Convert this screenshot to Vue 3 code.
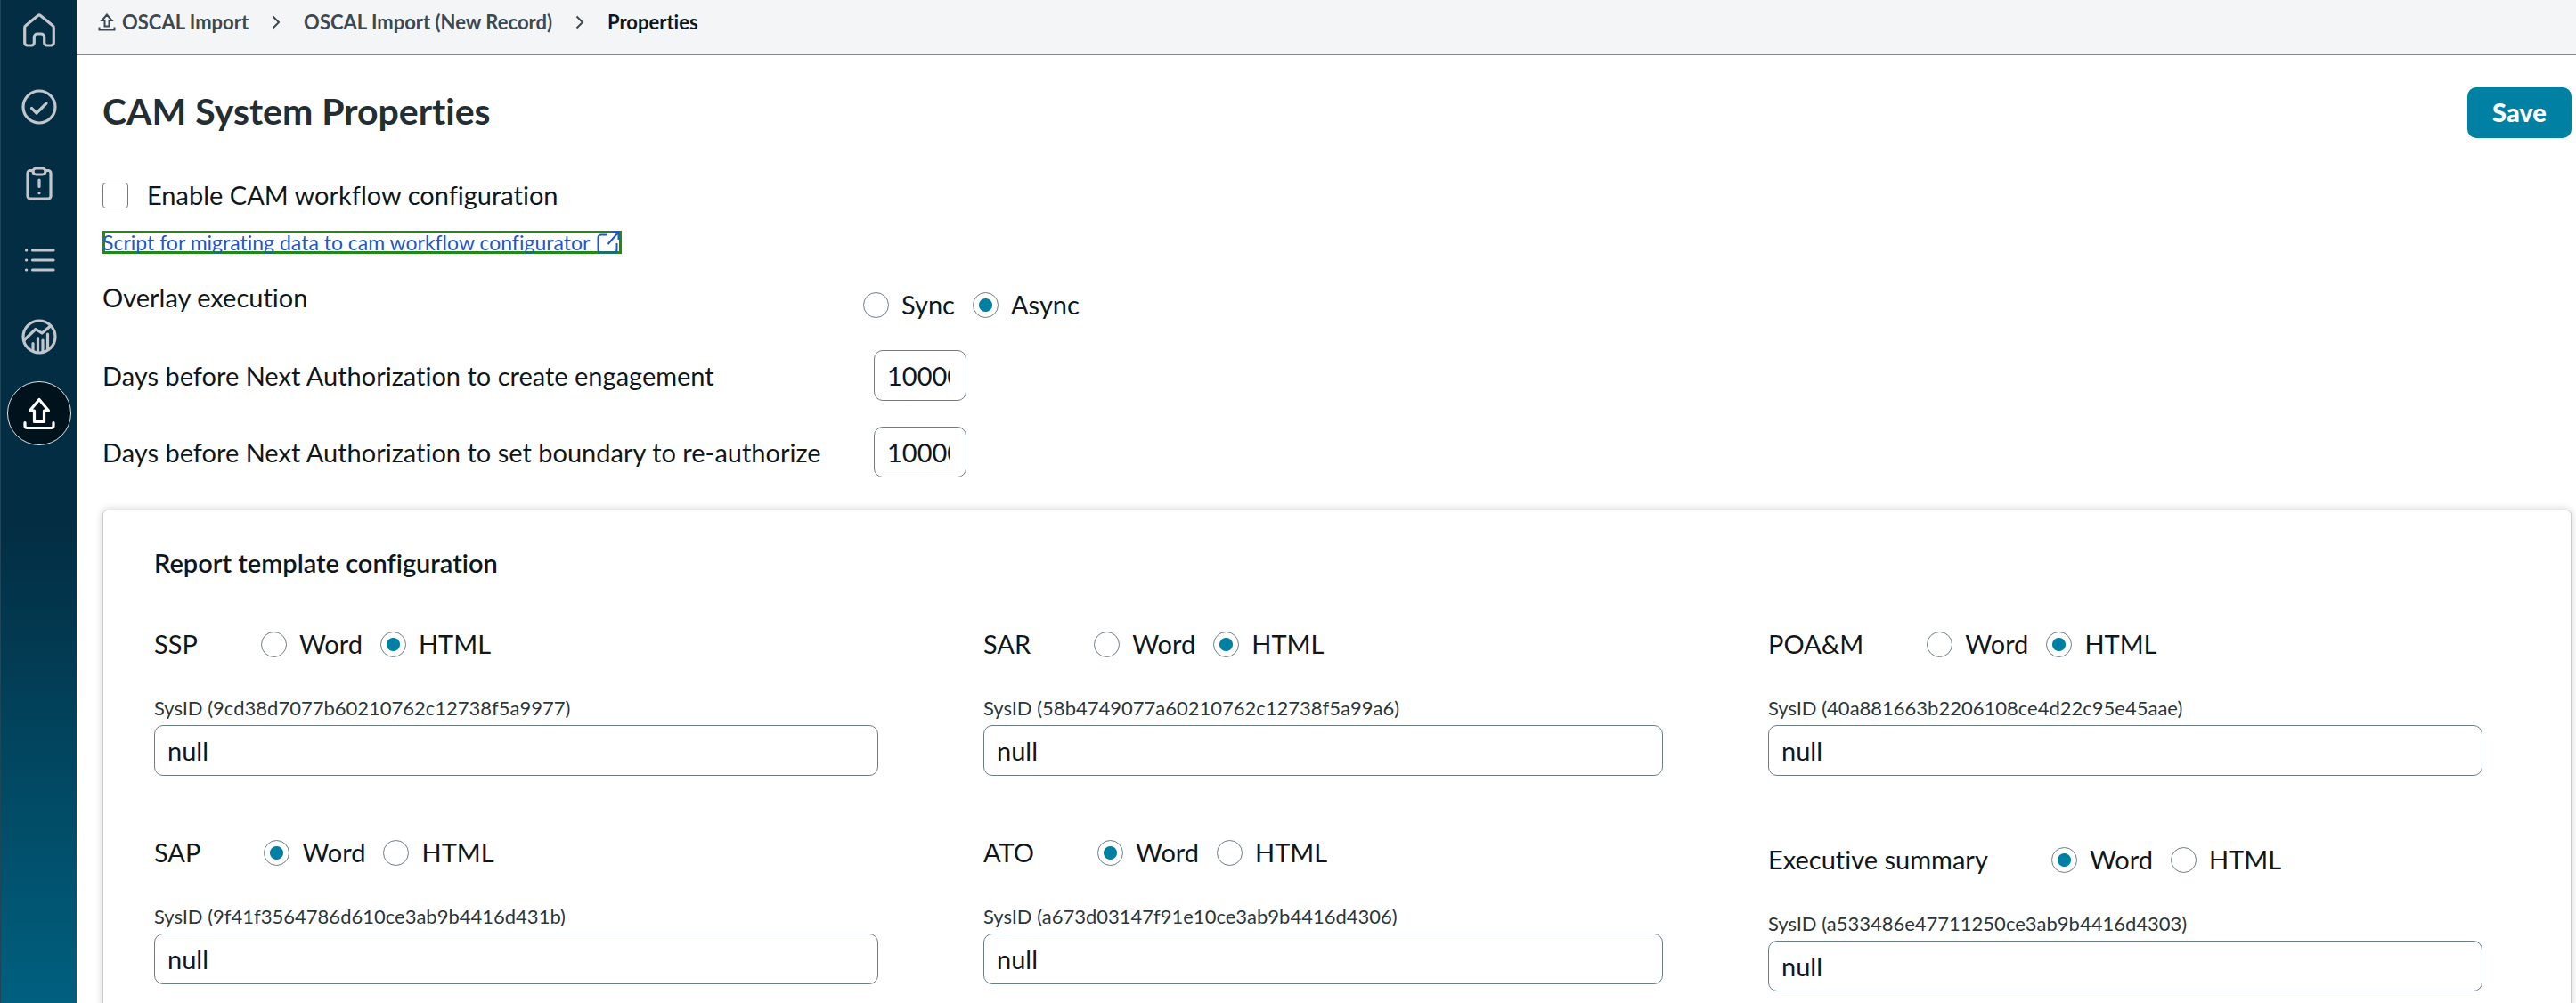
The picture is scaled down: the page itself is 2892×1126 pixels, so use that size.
<script setup>
import { ref } from 'vue'

const enableWorkflow = ref(false)
const execution = ref('Async')
const executionOptions = ['Sync', 'Async']
const formats = ['Word', 'HTML']

const thresholds = ref([
  { id: 'create-engagement', label: 'Days before Next Authorization to create engagement', value: '10000' },
  { id: 're-authorize', label: 'Days before Next Authorization to set boundary to re-authorize', value: '10000' },
])

const templates = ref([
  { id: 'ssp', name: 'SSP', format: 'HTML', sysId: '9cd38d7077b60210762c12738f5a9977', value: 'null' },
  { id: 'sar', name: 'SAR', format: 'HTML', sysId: '58b4749077a60210762c12738f5a99a6', value: 'null' },
  { id: 'poam', name: 'POA&M', format: 'HTML', sysId: '40a881663b2206108ce4d22c95e45aae', value: 'null' },
  { id: 'sap', name: 'SAP', format: 'Word', sysId: '9f41f3564786d610ce3ab9b4416d431b', value: 'null' },
  { id: 'ato', name: 'ATO', format: 'Word', sysId: 'a673d03147f91e10ce3ab9b4416d4306', value: 'null' },
  { id: 'exec', name: 'Executive summary', format: 'Word', sysId: 'a533486e47711250ce3ab9b4416d4303', value: 'null', long: true },
])
</script>

<template>
  <div class="shell">
    <nav class="sidebar" aria-label="Workspace">
      <a href="#" class="nav-item" aria-label="Home">
        <svg viewBox="0 0 40 40">
          <path d="M18.6 3.6 4.8 14.8a3 3 0 0 0-1.1 2.3V34a3 3 0 0 0 3 3h4.6a3 3 0 0 0 3-3v-6.500a3.500 3.500 0 0 1 3.500-3.500h4.400a3.500 3.500 0 0 1 3.500 3.500V34a3 3 0 0 0 3 3h4.600a3 3 0 0 0 3-3V17.100a3 3 0 0 0-1.100-2.300L21.400 3.600a2.200 2.200 0 0 0-2.800 0z" />
        </svg>
      </a>
      <a href="#" class="nav-item" aria-label="Tasks">
        <svg viewBox="0 0 40 40">
          <circle cx="20" cy="20" r="18" />
          <path d="M11.500 21.500l5.500 5.500 11-11" />
        </svg>
      </a>
      <a href="#" class="nav-item" aria-label="Issues">
        <svg viewBox="0 0 40 40">
          <path d="M13 5.500H10a3 3 0 0 0-3 3V34a3 3 0 0 0 3 3h20a3 3 0 0 0 3-3V8.500a3 3 0 0 0-3-3h-3" />
          <rect x="13" y="3" width="14" height="7" rx="3.500" />
          <path d="M20 16v7.500M20 30.500v.2" />
        </svg>
      </a>
      <a href="#" class="nav-item" aria-label="Lists">
        <svg viewBox="0 0 40 40">
          <path d="M12.500 9H36M12.500 20H36M12.500 31H36M5.500 9h.2M5.500 20h.2M5.500 31h.2" />
        </svg>
      </a>
      <a href="#" class="nav-item" aria-label="Analytics">
        <svg viewBox="0 0 40 40">
          <circle cx="20" cy="20" r="18" />
          <path d="M3.500 23.500 16 11.500l7 4.500 9-7.500M13 27.500v8M18.500 21.500v16M24 24v13.500M29.500 17v17" />
        </svg>
      </a>
      <a href="#" class="nav-item active" aria-label="OSCAL Import">
        <svg viewBox="0 0 40 40">
          <path d="M20 4.500 9.500 17h5v12.500h11V17h5zM4 30.500v3.500a2.500 2.500 0 0 0 2.500 2.500h27a2.500 2.500 0 0 0 2.500-2.500v-3.500" />
        </svg>
      </a>
    </nav>

    <div class="page">
      <nav class="breadcrumbs" aria-label="Breadcrumb">
        <a href="#" class="crumb">
          <svg class="crumb-icon" viewBox="0 0 20 20">
            <path d="M10 1.500 4.500 8H7.500v6.500h5V8h3zM1.500 15.500v3h17v-3" />
          </svg>
          OSCAL Import
        </a>
        <svg class="chevron" viewBox="0 0 10 16"><path d="M1.500 1.500 8 8l-6.500 6.500" /></svg>
        <a href="#" class="crumb">OSCAL Import (New Record)</a>
        <svg class="chevron" viewBox="0 0 10 16"><path d="M1.500 1.500 8 8l-6.500 6.500" /></svg>
        <span class="crumb current">Properties</span>
      </nav>

      <main class="content">
        <header class="title-bar">
          <h1>CAM System Properties</h1>
          <button type="button" class="save">Save</button>
        </header>

        <label class="check">
          <input v-model="enableWorkflow" type="checkbox" />
          Enable CAM workflow configuration
        </label>

        <a href="#" class="script-link">
          <span>Script for migrating data to cam workflow configurator</span>
          <svg viewBox="0 0 26 26">
            <path d="M12 4.500H4.500a3 3 0 0 0-3 3v14a3 3 0 0 0 3 3h15a3 3 0 0 0 3-3V14M16 1.500h8.500V10M24.500 1.500 12.500 15" />
          </svg>
        </a>

        <div class="setting overlay" role="radiogroup" aria-labelledby="overlay-label">
          <span id="overlay-label" class="setting-label">Overlay execution</span>
          <div class="options">
            <label v-for="option in executionOptions" :key="option" class="option">
              <input v-model="execution" type="radio" name="execution" :value="option" />
              {{ option }}
            </label>
          </div>
        </div>

        <div v-for="item in thresholds" :key="item.id" class="setting">
          <label class="setting-label" :for="item.id">{{ item.label }}</label>
          <input :id="item.id" v-model="item.value" type="text" class="field days" />
        </div>

        <section class="card">
          <h2>Report template configuration</h2>
          <div class="templates">
            <div v-for="item in templates" :key="item.id" class="template" :class="{ long: item.long }">
              <div class="template-head" role="radiogroup" :aria-label="item.name">
                <span>{{ item.name }}</span>
                <div class="options">
                  <label v-for="format in formats" :key="format" class="option">
                    <input v-model="item.format" type="radio" :name="item.id" :value="format" />
                    {{ format }}
                  </label>
                </div>
              </div>
              <label class="sys-label" :for="`sys-${item.id}`">SysID ({{ item.sysId }})</label>
              <input :id="`sys-${item.id}`" v-model="item.value" type="text" class="field" />
            </div>
          </div>
        </section>
      </main>
    </div>
  </div>
</template>

<style>
body {
  margin: 0;
  background: #fff;
}
</style>

<style scoped>
.shell {
  display: flex;
  height: 100vh;
  overflow: hidden;
  color: #10171a;
  font-family: Lato, 'Liberation Sans', sans-serif;
  font-size: 29px;
  font-variant-ligatures: none;
  line-height: 36px;
}

.sidebar {
  display: flex;
  flex: none;
  flex-direction: column;
  align-items: center;
  gap: 14px;
  box-sizing: border-box;
  width: 86px;
  margin-top: -2px;
  border-left: 1px solid #1f4558;
  background: linear-gradient(180deg, #032d42 0%, #032d42 52%, #00607f 100%);
}

.nav-item {
  display: flex;
  flex: none;
  align-items: center;
  justify-content: center;
  box-sizing: border-box;
  width: 72px;
  height: 72px;
  border-radius: 50%;
  color: #c0c6cc;
}

.nav-item svg {
  width: 40px;
  height: 40px;
  fill: none;
  stroke: currentColor;
  stroke-width: 3.2;
  stroke-linecap: round;
  stroke-linejoin: round;
}

.nav-item.active {
  border: 1px solid #dfe5e8;
  background: #00131d;
  color: #fff;
}

.page {
  flex: 1;
  min-width: 0;
}

.breadcrumbs {
  display: flex;
  align-items: center;
  gap: 26px;
  box-sizing: border-box;
  height: 62px;
  padding: 0 24px 12px;
  border-bottom: 1px solid #7d8a94;
  background: #f4f5f7;
  font-size: 22px;
  line-height: 28px;
}

.crumb {
  display: flex;
  align-items: center;
  gap: 7px;
  color: #3c4950;
  font-weight: 700;
  text-decoration: none;
}

.crumb.current {
  color: #10171a;
}

.crumb-icon {
  width: 20px;
  height: 20px;
  fill: none;
  stroke: currentColor;
  stroke-width: 2;
}

.chevron {
  width: 10px;
  height: 16px;
  fill: none;
  stroke: #3c4950;
  stroke-width: 2;
}

.content {
  display: flex;
  flex-direction: column;
  align-items: flex-start;
  padding: 36px 5px 0 29px;
}

.title-bar {
  display: flex;
  align-items: flex-start;
  justify-content: space-between;
  align-self: stretch;
}

h1 {
  margin: 0;
  color: #232e33;
  font-size: 41px;
  font-weight: 700;
  line-height: 54px;
}

.save {
  width: 117px;
  height: 57px;
  padding: 0 0 2px;
  border: 0;
  border-radius: 10px;
  background: #0080a3;
  color: #fff;
  font: inherit;
  font-weight: 900;
}

.check {
  display: flex;
  align-items: center;
  gap: 21px;
  margin-top: 46px;
}

.check input {
  width: 29px;
  height: 29px;
  margin: 0;
  border: 1px solid #6e7c83;
  border-radius: 4px;
  background: #fff;
  appearance: none;
}

.check input:checked {
  background: #0080a3;
}

.script-link {
  display: flex;
  align-items: center;
  gap: 8px;
  height: 26px;
  margin-top: 22px;
  padding-right: 2px;
  box-shadow: inset 0 0 0 3px #238815;
  color: #1f58c7;
  font-size: 23px;
  line-height: 26px;
  text-decoration: none;
}

.script-link svg {
  width: 26px;
  height: 26px;
  fill: none;
  stroke: currentColor;
  stroke-width: 2;
}

.setting {
  display: grid;
  grid-template-columns: 866px auto;
  align-items: center;
  margin-top: 29px;
}

.setting.overlay {
  grid-template-columns: 854px auto;
  align-items: start;
  margin-top: 31px;
  margin-bottom: 4px;
}

.overlay .options {
  margin-top: 8px;
}

.options {
  display: flex;
  gap: 20px;
}

.option {
  display: flex;
  align-items: center;
  gap: 14px;
}

.option input {
  width: 29px;
  height: 29px;
  margin: 0;
  border: 1px solid #6e7c83;
  border-radius: 50%;
  background: #fff;
  appearance: none;
}

.option input:checked {
  background: radial-gradient(circle, #0080a3 7px, #fff 8px);
}

.field {
  box-sizing: border-box;
  width: 100%;
  height: 57px;
  padding: 0 14px;
  border: 1px solid #6e7c83;
  border-radius: 10px;
  background: #fff;
  color: inherit;
  font: inherit;
  font-variant-ligatures: none;
}

.field.days {
  width: 104px;
  padding-right: 18px;
}

.card {
  align-self: stretch;
  box-sizing: border-box;
  margin-top: 36px;
  padding: 41px 99px 60px 57px;
  border: 1px solid #ccc;
  border-radius: 6px;
  box-shadow: 0 0 8px rgba(0, 0, 0, 0.2);
}

h2 {
  margin: 0;
  font-size: 29px;
  font-weight: 600;
  line-height: 36px;
}

.templates {
  display: grid;
  grid-template-columns: 813fr 763fr 802fr;
  gap: 68px 118px;
  margin-top: 55px;
}

.template {
  display: flex;
  flex-direction: column;
}

.template.long {
  padding-top: 8px;
}

.template-head {
  display: flex;
  align-items: center;
  gap: 71px;
}

.sys-label {
  margin-top: 40px;
  margin-bottom: 5px;
  color: #2b363b;
  font-size: 22px;
  line-height: 28px;
}
</style>
